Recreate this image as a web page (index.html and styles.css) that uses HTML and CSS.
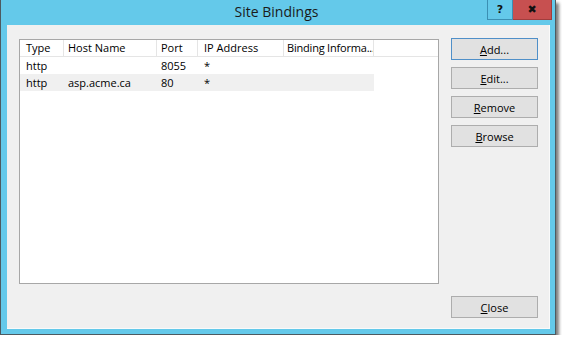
FILE: index.html
```html
<!DOCTYPE html>
<html>
<head>
	<meta charset="utf-8" />
	<title>Site Bindings</title>
	<link rel="stylesheet" href="styles.css">
</head>
<body>
<div class="window">
	<div class="titlebar">
		<span></span>
		<span class="title">Site Bindings</span>
		<div class="caption-btns">
			<span class="cap-help">?</span>
			<span class="cap-close">&#x2716;</span>
		</div>
	</div>
	<div class="content">
		<div class="listview">
			<div class="row head">
				<span class="c-type">Type</span>
				<span class="c-host">Host Name</span>
				<span class="c-port">Port</span>
				<span class="c-ip">IP Address</span>
				<span class="c-bind">Binding Informa...</span>
				<span class="c-rest"></span>
			</div>
			<div class="row">
				<span class="c-type">http</span>
				<span class="c-host"></span>
				<span class="c-port">8055</span>
				<span class="c-ip">*</span>
				<span class="c-bind"></span>
			</div>
			<div class="row alt">
				<span class="c-type">http</span>
				<span class="c-host">asp.acme.ca</span>
				<span class="c-port">80</span>
				<span class="c-ip">*</span>
				<span class="c-bind"></span>
			</div>
		</div>
		<div class="side">
			<div class="btn-stack">
				<button class="btn default"><u>A</u>dd...</button>
				<button class="btn"><u>E</u>dit...</button>
				<button class="btn"><u>R</u>emove</button>
				<button class="btn"><u>B</u>rowse</button>
			</div>
			<button class="btn"><u>C</u>lose</button>
		</div>
	</div>
</div>
</body>
</html>
```
FILE: styles.css
```css
* {
	margin: 0;
	padding: 0;
	box-sizing: border-box;
}
body {
	background: #fff;
	font-family: "Open Sans", "Noto Sans", sans-serif;
	font-size: 11px;
	color: #000;
}
.window {
	width: 556px;
	height: 335px;
	background: #64c9ea;
	border: 1px solid #4d5a60;
	border-top: none;
	box-shadow: 3px 3px 3px rgba(0, 0, 0, 0.5);
	display: flex;
	flex-direction: column;
}
.titlebar {
	height: 25px;
	display: grid;
	grid-template-columns: 1fr auto 1fr;
	align-items: start;
	padding-right: 3px;
}
.title {
	font-size: 14px;
	line-height: 24px;
	color: #1a1a1a;
}
.caption-btns {
	display: flex;
	justify-content: flex-end;
}
.caption-btns span {
	height: 20px;
	display: flex;
	align-items: center;
	justify-content: center;
	font-family: "DejaVu Sans", sans-serif;
	font-weight: bold;
	color: #111;
}
.cap-help {
	width: 26px;
	border: 1px solid #3b8fb3;
	border-top: none;
	font-size: 11px;
}
.cap-close {
	width: 39px;
	background: #c75050;
	border: 1px solid #a03d3d;
	border-top: none;
	border-left: none;
	font-size: 11px;
}
.content {
	flex: 1;
	margin: 0 5px 5px 6px;
	background: #f0f0f0;
	border-right: 1px solid #fafafa;
	border-bottom: 1px solid #fafafa;
	padding: 13px 11px 10px 12px;
	display: flex;
	gap: 12px;
}
.listview {
	width: 420px;
	height: 245px;
	margin-top: 1px;
	background: #fff;
	border: 1px solid #a7a7a7;
}
.row {
	display: flex;
	height: 17px;
	line-height: 17px;
	white-space: nowrap;
}
.row span {
	padding-left: 4px;
	overflow: hidden;
}
.row.head {
	border-bottom: 1px solid #e5e5e5;
	height: 17px;
	line-height: 16px;
}
.row.head span {
	border-right: 1px solid #e5e5e5;
}
.row.head .c-rest {
	flex: 1;
	border-right: none;
}
.row.head .c-bind {
	padding-left: 3px;
	letter-spacing: -0.2px;
}
.row.alt span {
	background: #f0f0f0;
}
.c-type {
	width: 44px;
	padding-left: 6px !important;
}
.c-host {
	width: 93px;
}
.c-port {
	width: 41px;
}
.c-ip {
	width: 86px;
	padding-left: 6px !important;
}
.c-bind {
	width: 90px;
}
.side {
	width: 87px;
	display: flex;
	flex-direction: column;
	justify-content: space-between;
}
.btn-stack {
	display: flex;
	flex-direction: column;
	gap: 7px;
}
.btn {
	height: 22px;
	background: #e1e1e1;
	border: 1px solid #adadad;
	font-family: inherit;
	font-size: 11px;
	color: #000;
}
.btn.default {
	border-color: #4f8fc8;
}
```
